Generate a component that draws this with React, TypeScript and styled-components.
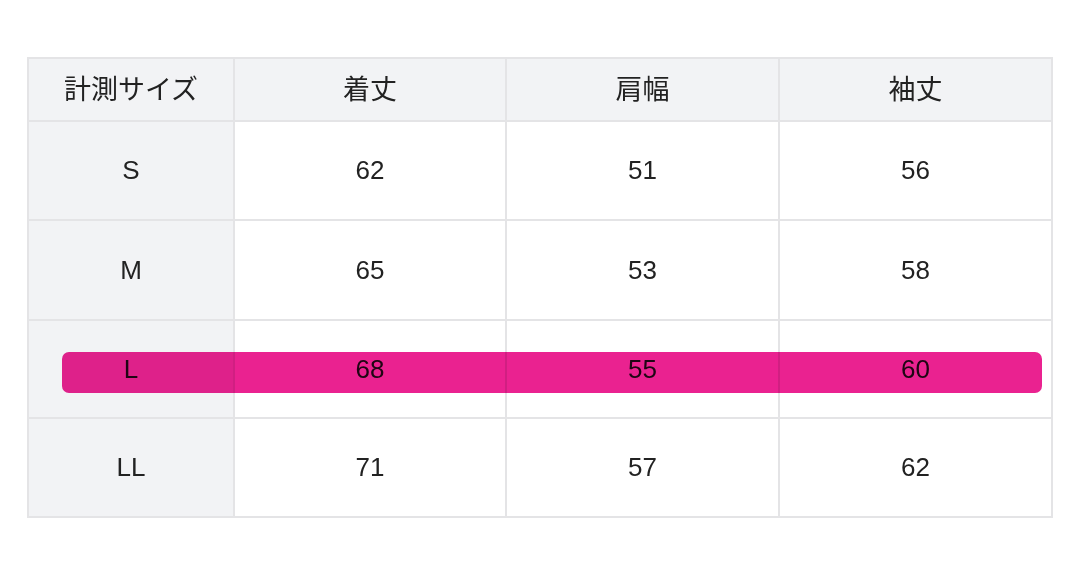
import { createGlobalStyle, styled } from 'styled-components';

const GlobalStyle = createGlobalStyle`
  html, body {
    margin: 0;
    padding: 0;
    background: #ffffff;
  }
  body {
    font-family: "Liberation Sans", "Noto Sans CJK JP", sans-serif;
    color: #222222;
  }
`;

const Page = styled.main`
  padding: 57px 0 0 27px;
`;

const TableWrap = styled.div`
  position: relative;
  width: 1026px;
  isolation: isolate;
`;

const Grid = styled.div`
  display: grid;
  grid-template-columns: 204px 270px 271px 271px;
  grid-template-rows: 61px 97px 98px 96px 97px;
  gap: 2px;
  padding: 2px;
  background: #e4e4e6;
`;

const Cell = styled.div<{ $shaded?: boolean; $jp?: boolean }>`
  display: flex;
  align-items: center;
  justify-content: center;
  background: ${(p) => (p.$shaded ? '#f2f3f5' : '#ffffff')};
  font-family: ${(p) =>
    p.$jp ? '"Noto Sans CJK JP", sans-serif' : '"Liberation Sans", Arial, sans-serif'};
  font-size: ${(p) => (p.$jp ? '27px' : '26px')};
  line-height: 1;
  padding-bottom: ${(p) => (p.$jp ? '5px' : '1px')};
`;

const Marker = styled.div`
  position: absolute;
  left: 35px;
  top: 295px;
  width: 980px;
  height: 41px;
  border-radius: 7px;
  background: #ea2290;
  mix-blend-mode: multiply;
  pointer-events: none;
`;

const headers = ['計測サイズ', '着丈', '肩幅', '袖丈'];

const rows = [
  { size: 'S', values: [62, 51, 56] },
  { size: 'M', values: [65, 53, 58] },
  { size: 'L', values: [68, 55, 60] },
  { size: 'LL', values: [71, 57, 62] },
];

function App() {
  return (
    <>
      <GlobalStyle />
      <Page>
        <TableWrap>
          <Grid>
            {headers.map((h) => (
              <Cell key={h} $shaded $jp>
                {h}
              </Cell>
            ))}
            {rows.map((row) => [
              <Cell key={row.size} $shaded>
                {row.size}
              </Cell>,
              ...row.values.map((v, i) => <Cell key={row.size + i}>{v}</Cell>),
            ])}
          </Grid>
          <Marker />
        </TableWrap>
      </Page>
    </>
  );
}

export default App;
